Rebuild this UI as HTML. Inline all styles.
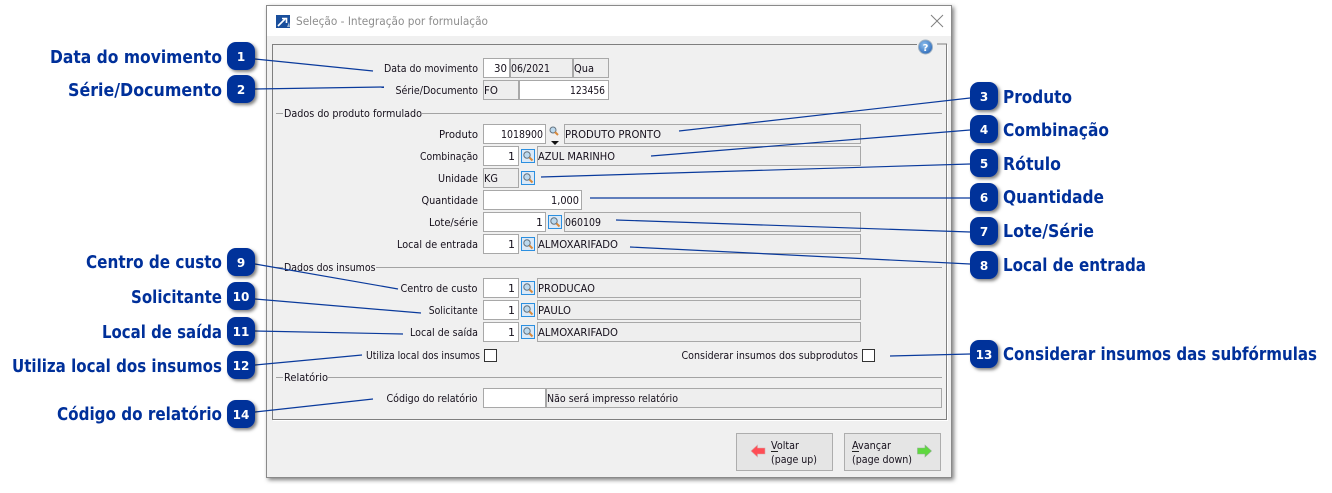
<!DOCTYPE html>
<html><head><meta charset="utf-8"><title>Seleção - Integração por formulação</title>
<style>
html,body{margin:0;padding:0;background:#fff;width:1332px;height:493px;overflow:hidden}
svg{display:block}
text{font-family:"DejaVu Sans","Liberation Sans",sans-serif;font-size:11px;fill:#16101c}
.c{font-size:17.5px;font-weight:bold;fill:#00309a}
.n{font-size:12px;font-weight:bold;fill:#fff;text-anchor:middle}
.t{font-size:11.5px;fill:#8d8d8d}
.w{fill:#fff;stroke:#a8a8a8}
.g{fill:#eeeeee;stroke:#a8a8a8}
.l{stroke:#0a3a9c;stroke-width:1.2}
.b{fill:#00309a;filter:url(#s)}
.gl{stroke:#a3a3a3;fill:none}
</style></head><body>
<svg width="1332" height="493" viewBox="0 0 1332 493" xmlns="http://www.w3.org/2000/svg">
<defs>
<filter id="s" x="-30%" y="-30%" width="170%" height="170%"><feDropShadow dx="2" dy="2" stdDeviation="1.6" flood-color="#000" flood-opacity=".5"/></filter>
<filter id="ws" x="-2%" y="-2%" width="104%" height="104%"><feDropShadow dx="2" dy="2" stdDeviation="2" flood-color="#000" flood-opacity=".5"/></filter>
<radialGradient id="q" cx=".4" cy=".35" r=".7"><stop offset="0" stop-color="#8fc0ee"/><stop offset="1" stop-color="#2a68b8"/></radialGradient>
<g id="m"><rect x=".5" y=".5" width="13" height="13" fill="#dbe9f7" stroke="#2b8fe0"/><circle cx="6" cy="6" r="3.2" fill="#bcd9ee" stroke="#63727f"/><path d="M8.5 8.5L11.5 11.5" stroke="#d98a3c" stroke-width="2"/></g>
</defs>

<!-- window -->
<rect x="266.5" y="5.5" width="685" height="472" fill="#f0f0f0" stroke="#8a8a8a" filter="url(#ws)"/>
<rect x="267" y="6" width="684" height="30" fill="#fff"/>
<rect x="276" y="15" width="14" height="13" fill="#1a4f9c"/>
<path d="M278 26L285 19M282 18.500H286.500V23" stroke="#fff" stroke-width="1.600" fill="none"/>
<path d="M287 27l2-5 1 5z" fill="#9db4d0"/>
<text class="t" x="296" y="25" textLength="192" lengthAdjust="spacingAndGlyphs">Seleção - Integração por formulação</text>
<path d="M931 15L943 27M943 15L931 27" stroke="#808080" fill="none"/>

<!-- panel -->
<path d="M917 44.500H272.500V419.500H946.500V44H937" stroke="#7f7f7f" fill="none"/>
<path d="M947.500 45V420.500H273" stroke="#fff" fill="none"/>
<circle cx="925.500" cy="47" r="7" fill="url(#q)" stroke="#9fb0c0"/>
<text x="925.500" y="51" text-anchor="middle" style="font-size:10px;font-weight:bold;fill:#fff">?</text>

<!-- groups -->
<path class="gl" d="M276 113.500H283M422 113.500H942"/>
<text x="284" y="117" textLength="138" lengthAdjust="spacingAndGlyphs">Dados do produto formulado</text>
<path class="gl" d="M276 267.500H283M376 267.500H942"/>
<text x="284" y="271" textLength="91.500" lengthAdjust="spacingAndGlyphs">Dados dos insumos</text>
<path class="gl" d="M276 377.500H283M328 377.500H942"/>
<text x="284" y="381" textLength="44" lengthAdjust="spacingAndGlyphs">Relatório</text>

<!-- labels -->
<text x="384" y="72" textLength="94" lengthAdjust="spacingAndGlyphs">Data do movimento</text>
<text x="395.500" y="94" textLength="82.500" lengthAdjust="spacingAndGlyphs">Série/Documento</text>
<text x="439" y="138" textLength="39" lengthAdjust="spacingAndGlyphs">Produto</text>
<text x="420" y="160" textLength="58" lengthAdjust="spacingAndGlyphs">Combinação</text>
<text x="438" y="182" textLength="40" lengthAdjust="spacingAndGlyphs">Unidade</text>
<text x="421.500" y="204" textLength="56.500" lengthAdjust="spacingAndGlyphs">Quantidade</text>
<text x="429" y="226" textLength="49" lengthAdjust="spacingAndGlyphs">Lote/série</text>
<text x="397" y="248" textLength="81" lengthAdjust="spacingAndGlyphs">Local de entrada</text>
<text x="400.500" y="292" textLength="77" lengthAdjust="spacingAndGlyphs">Centro de custo</text>
<text x="428.700" y="314" textLength="49" lengthAdjust="spacingAndGlyphs">Solicitante</text>
<text x="410" y="336" textLength="68" lengthAdjust="spacingAndGlyphs">Local de saída</text>
<text x="366" y="359" textLength="114" lengthAdjust="spacingAndGlyphs">Utiliza local dos insumos</text>
<text x="681.500" y="359" textLength="176.500" lengthAdjust="spacingAndGlyphs">Considerar insumos dos subprodutos</text>
<text x="386.500" y="402" textLength="91" lengthAdjust="spacingAndGlyphs">Código do relatório</text>

<!-- fields -->
<rect class="w" x="483.500" y="58.500" width="26" height="19"/>
<rect class="g" x="510.500" y="58.500" width="62" height="19"/>
<rect class="g" x="573.500" y="58.500" width="35" height="19"/>
<text x="494" y="72" textLength="13" lengthAdjust="spacingAndGlyphs">30</text>
<text x="511" y="72" textLength="39" lengthAdjust="spacingAndGlyphs">06/2021</text>
<text x="574" y="72" textLength="20" lengthAdjust="spacingAndGlyphs">Qua</text>

<rect class="g" x="483.500" y="80.500" width="35" height="19"/>
<rect class="w" x="519.500" y="80.500" width="89" height="19"/>
<text x="484" y="94" textLength="14" lengthAdjust="spacingAndGlyphs">FO</text>
<text x="570" y="94" textLength="35" lengthAdjust="spacingAndGlyphs">123456</text>

<rect class="w" x="483.500" y="124.500" width="62" height="19"/>
<text x="501" y="138" textLength="42" lengthAdjust="spacingAndGlyphs">1018900</text>
<circle cx="553" cy="130" r="3" fill="#bcd9ee" stroke="#63727f"/><path d="M555 132L558 135" stroke="#d98a3c" stroke-width="2"/>
<path d="M551 141h8l-4 4z" fill="#111"/>
<rect class="g" x="564.500" y="124.500" width="296" height="19"/>
<text x="565" y="138" textLength="96" lengthAdjust="spacingAndGlyphs">PRODUTO PRONTO</text>

<rect class="w" x="483.500" y="146.500" width="35" height="19"/>
<text x="508" y="160" textLength="7" lengthAdjust="spacingAndGlyphs">1</text>
<use href="#m" x="521" y="149"/>
<rect class="g" x="537.500" y="146.500" width="323" height="19"/>
<text x="538" y="160" textLength="77" lengthAdjust="spacingAndGlyphs">AZUL MARINHO</text>

<rect class="g" x="483.500" y="168.500" width="35" height="19"/>
<text x="484" y="182" textLength="14" lengthAdjust="spacingAndGlyphs">KG</text>
<use href="#m" x="521" y="171"/>

<rect class="w" x="483.500" y="190.500" width="98" height="19"/>
<text x="551" y="204" textLength="28" lengthAdjust="spacingAndGlyphs">1,000</text>

<rect class="w" x="483.500" y="212.500" width="62" height="19"/>
<text x="536" y="226" textLength="7" lengthAdjust="spacingAndGlyphs">1</text>
<use href="#m" x="548" y="215"/>
<rect class="g" x="564.500" y="212.500" width="296" height="19"/>
<text x="565" y="226" textLength="36" lengthAdjust="spacingAndGlyphs">060109</text>

<rect class="w" x="483.500" y="234.500" width="35" height="19"/>
<text x="508" y="248" textLength="7" lengthAdjust="spacingAndGlyphs">1</text>
<use href="#m" x="521" y="237"/>
<rect class="g" x="537.500" y="234.500" width="323" height="19"/>
<text x="538" y="248" textLength="80" lengthAdjust="spacingAndGlyphs">ALMOXARIFADO</text>

<rect class="w" x="483.500" y="278.500" width="35" height="19"/>
<text x="508" y="292" textLength="7" lengthAdjust="spacingAndGlyphs">1</text>
<use href="#m" x="521" y="281"/>
<rect class="g" x="537.500" y="278.500" width="323" height="19"/>
<text x="538" y="292" textLength="57" lengthAdjust="spacingAndGlyphs">PRODUCAO</text>

<rect class="w" x="483.500" y="300.500" width="35" height="19"/>
<text x="508" y="314" textLength="7" lengthAdjust="spacingAndGlyphs">1</text>
<use href="#m" x="521" y="303"/>
<rect class="g" x="537.500" y="300.500" width="323" height="19"/>
<text x="538" y="314" textLength="33" lengthAdjust="spacingAndGlyphs">PAULO</text>

<rect class="w" x="483.500" y="322.500" width="35" height="19"/>
<text x="508" y="336" textLength="7" lengthAdjust="spacingAndGlyphs">1</text>
<use href="#m" x="521" y="325"/>
<rect class="g" x="537.500" y="322.500" width="323" height="19"/>
<text x="538" y="336" textLength="80" lengthAdjust="spacingAndGlyphs">ALMOXARIFADO</text>

<rect x="484.500" y="349.500" width="12" height="12" fill="#fff" stroke="#333"/>
<rect x="862.500" y="349.500" width="12" height="12" fill="#fff" stroke="#333"/>

<rect class="w" x="483.500" y="388.500" width="62" height="19"/>
<rect class="g" x="546.500" y="388.500" width="395" height="19"/>
<text x="547" y="402" textLength="131" lengthAdjust="spacingAndGlyphs">Não será impresso relatório</text>

<!-- buttons -->
<rect x="736.500" y="433.500" width="96" height="37" fill="#e5e5e5" stroke="#adadad"/>
<path d="M751 451l6.500-6v3h7.500v6h-7.500v3z" fill="#ff4d55" stroke="#d8a8a8" stroke-width=".6"/>
<text x="771" y="449" textLength="28" lengthAdjust="spacingAndGlyphs">Voltar</text>
<path d="M771 451.500h7" stroke="#222"/>
<text x="771" y="463" textLength="46" lengthAdjust="spacingAndGlyphs">(page up)</text>
<rect x="844.500" y="433.500" width="96" height="37" fill="#e5e5e5" stroke="#adadad"/>
<path d="M931.500 451l-6.500-6v3h-7.500v6h7.500v3z" fill="#5fd83f" stroke="#8fb08f" stroke-width=".6"/>
<text x="852" y="449" textLength="39" lengthAdjust="spacingAndGlyphs">Avançar</text>
<path d="M852 451.500h7" stroke="#222"/>
<text x="852" y="463" textLength="60" lengthAdjust="spacingAndGlyphs">(page down)</text>

<!-- leader lines -->
<line class="l" x1="255" y1="59" x2="373" y2="71"/>
<line class="l" x1="255" y1="89" x2="384" y2="87"/>
<line class="l" x1="970" y1="98" x2="679" y2="131"/>
<line class="l" x1="970" y1="130" x2="651" y2="156"/>
<line class="l" x1="970" y1="164" x2="541" y2="177"/>
<line class="l" x1="970" y1="198" x2="590" y2="198"/>
<line class="l" x1="970" y1="232" x2="616" y2="220"/>
<line class="l" x1="970" y1="264" x2="630" y2="247"/>
<line class="l" x1="255" y1="264" x2="398" y2="289"/>
<line class="l" x1="255" y1="299" x2="421" y2="313"/>
<line class="l" x1="255" y1="331" x2="403" y2="334"/>
<line class="l" x1="255" y1="365" x2="362" y2="355"/>
<line class="l" x1="970" y1="354" x2="890" y2="356"/>
<line class="l" x1="255" y1="412" x2="373" y2="399"/>

<!-- badges -->
<rect class="b" x="227" y="42" width="28" height="28" rx="9"/><text class="n" x="241" y="61">1</text>
<rect class="b" x="227" y="75" width="28" height="28" rx="9"/><text class="n" x="241" y="94">2</text>
<rect class="b" x="970" y="82" width="28" height="28" rx="9"/><text class="n" x="984" y="101">3</text>
<rect class="b" x="970" y="115" width="28" height="28" rx="9"/><text class="n" x="984" y="134">4</text>
<rect class="b" x="970" y="149" width="28" height="28" rx="9"/><text class="n" x="984" y="168">5</text>
<rect class="b" x="970" y="183" width="28" height="28" rx="9"/><text class="n" x="984" y="202">6</text>
<rect class="b" x="970" y="217" width="28" height="28" rx="9"/><text class="n" x="984" y="236">7</text>
<rect class="b" x="970" y="251" width="28" height="28" rx="9"/><text class="n" x="984" y="270">8</text>
<rect class="b" x="227" y="248" width="28" height="28" rx="9"/><text class="n" x="241" y="267">9</text>
<rect class="b" x="227" y="282" width="28" height="28" rx="9"/><text class="n" x="241" y="301">10</text>
<rect class="b" x="227" y="317" width="28" height="28" rx="9"/><text class="n" x="241" y="336">11</text>
<rect class="b" x="227" y="351" width="28" height="28" rx="9"/><text class="n" x="241" y="370">12</text>
<rect class="b" x="970" y="340" width="28" height="28" rx="9"/><text class="n" x="984" y="359">13</text>
<rect class="b" x="227" y="400" width="28" height="28" rx="9"/><text class="n" x="241" y="419">14</text>

<!-- callout labels -->
<text class="c" x="50" y="63" textLength="172" lengthAdjust="spacingAndGlyphs">Data do movimento</text>
<text class="c" x="68" y="96" textLength="154" lengthAdjust="spacingAndGlyphs">Série/Documento</text>
<text class="c" x="86" y="268" textLength="136" lengthAdjust="spacingAndGlyphs">Centro de custo</text>
<text class="c" x="131" y="303" textLength="91" lengthAdjust="spacingAndGlyphs">Solicitante</text>
<text class="c" x="102" y="338" textLength="120" lengthAdjust="spacingAndGlyphs">Local de saída</text>
<text class="c" x="12" y="372" textLength="210" lengthAdjust="spacingAndGlyphs">Utiliza local dos insumos</text>
<text class="c" x="57" y="420" textLength="165" lengthAdjust="spacingAndGlyphs">Código do relatório</text>
<text class="c" x="1003" y="103" textLength="69" lengthAdjust="spacingAndGlyphs">Produto</text>
<text class="c" x="1003" y="136" textLength="106" lengthAdjust="spacingAndGlyphs">Combinação</text>
<text class="c" x="1003" y="170" textLength="58" lengthAdjust="spacingAndGlyphs">Rótulo</text>
<text class="c" x="1003" y="203" textLength="101" lengthAdjust="spacingAndGlyphs">Quantidade</text>
<text class="c" x="1003" y="237" textLength="91" lengthAdjust="spacingAndGlyphs">Lote/Série</text>
<text class="c" x="1003" y="271" textLength="143" lengthAdjust="spacingAndGlyphs">Local de entrada</text>
<text class="c" x="1003" y="360" textLength="314" lengthAdjust="spacingAndGlyphs">Considerar insumos das subfórmulas</text>
</svg>
</body></html>
